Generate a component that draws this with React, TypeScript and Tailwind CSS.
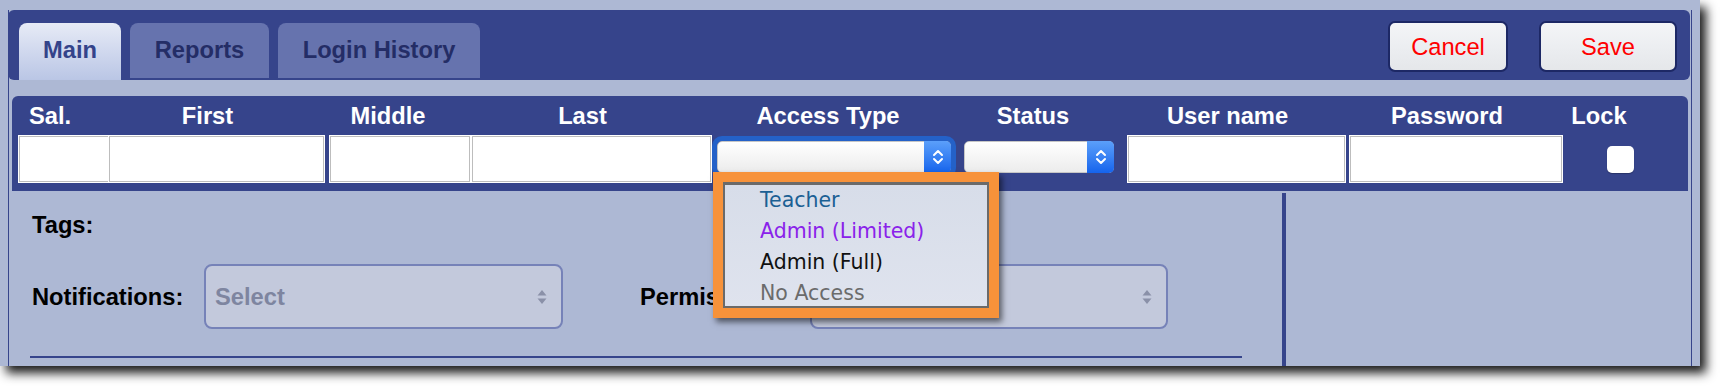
import React from 'react';

const NAVY = 'bg-[#36448b]';

function Chevrons() {
    return (
        <svg width="14" height="20" viewBox="0 0 14 20" fill="none" stroke="white" strokeWidth="2" strokeLinecap="round" strokeLinejoin="round">
            <path d="M3 8 L7 4 L11 8" />
            <path d="M3 12 L7 16 L11 12" />
        </svg>
    );
}

function MacSelect({ className, focused }: { className: string; focused?: boolean }) {
    return (
        <div className={`h-[32px] mt-[5px] flex rounded-[5px] border border-[#c6c6c6] bg-gradient-to-b from-white to-[#ececec] ${focused ? 'ring-[5px] ring-[#2461c8]' : ''} ${className}`}>
            <div className="flex-1" />
            <div className="w-[27px] -my-px -mr-px rounded-r-[5px] bg-gradient-to-b from-[#5b9ffa] to-[#1463ec] flex items-center justify-center">
                <Chevrons />
            </div>
        </div>
    );
}

function TextBox({ className }: { className: string }) {
    return <div className={`h-[46px] bg-white border border-[#bdbdbd] shadow-[0_0_0_1px_#ffffff] ${className}`} />;
}

function SortArrows() {
    return (
        <svg width="10" height="18" viewBox="0 0 10 18">
            <path d="M5 2 L9.5 7.5 H0.5 Z" fill="#8a90a8" />
            <path d="M5 16 L9.5 10.5 H0.5 Z" fill="#8a90a8" />
        </svg>
    );
}

function GraySelect({ className }: { className: string }) {
    return (
        <div className={`h-[65px] flex items-center justify-between pl-[9px] pr-[14px] rounded-[8px] border-2 border-[#7682b8] bg-[#c3c9dc] ${className}`}>
            <span className="font-bold text-[#7e85a0]">Select</span>
            <SortArrows />
        </div>
    );
}

const headers = [
    { label: 'Sal.', w: 'w-[76px]' },
    { label: 'First', w: 'w-[239px]' },
    { label: 'Middle', w: 'w-[122px]' },
    { label: 'Last', w: 'w-[267px]' },
    { label: 'Access Type', w: 'w-[224px]' },
    { label: 'Status', w: 'w-[186px]' },
    { label: 'User name', w: 'w-[203px]' },
    { label: 'Password', w: 'w-[236px]' },
    { label: 'Lock', w: 'w-[68px]' },
];

const options = [
    { label: 'Teacher', color: 'text-[#1b6094]' },
    { label: 'Admin (Limited)', color: 'text-[#8a22ea]' },
    { label: 'Admin (Full)', color: 'text-[#111111]' },
    { label: 'No Access', color: 'text-[#6b6b6b]' },
];

export default function App() {
    return (
        <div className="w-[1720px] h-[386px] bg-white overflow-hidden font-['Liberation_Sans',Arial,sans-serif] text-[23.7px] leading-[24px]">
            <div className="relative w-[1700px] h-[366px] bg-[#adb8d4] shadow-[6px_7px_10px_rgba(0,0,0,0.9)] pl-[8px] pt-[10px]">
                <div className="flex flex-col w-[1684px] h-[356px] border-x border-[#36448b]">
                    {/* tab bar */}
                    <div className={`-ml-px w-[1682px] h-[70px] shrink-0 ${NAVY} rounded-[6px] flex justify-between pl-[11px] pr-[13px]`}>
                        <div className="self-end flex items-end gap-[9px] font-bold">
                            <div className="w-[102px] h-[57px] rounded-t-[8px] bg-gradient-to-b from-[#e7ebf6] via-[#d0d8ee] to-[#bac6e5] text-center pt-[15px] text-[#34438a]">Main</div>
                            <div className="w-[139px] h-[55px] mb-[2px] rounded-t-[8px] bg-[#6673ae] text-center pt-[15px] text-[#242d66]">Reports</div>
                            <div className="w-[202px] h-[55px] mb-[2px] rounded-t-[8px] bg-[#6673ae] text-center pt-[15px] text-[#242d66]">Login History</div>
                        </div>
                        <div className="self-start mt-[11px] flex gap-[31px]">
                            <button className="w-[120px] h-[51px] rounded-[7px] border-2 border-[#1d2865] bg-gradient-to-b from-[#f4f5f7] via-[#eceef1] to-[#e5e7ea] text-[#ff0000]">Cancel</button>
                            <button className="w-[138px] h-[51px] rounded-[7px] border-2 border-[#1d2865] bg-gradient-to-b from-[#f4f5f7] via-[#eceef1] to-[#e5e7ea] text-[#ff0000]">Save</button>
                        </div>
                    </div>

                    {/* name header */}
                    <div className={`mt-[16px] ml-[3px] w-[1676px] h-[95px] shrink-0 ${NAVY} rounded-t-[6px] pt-[8px]`}>
                        <div className="flex text-white font-bold">
                            {headers.map(h => (
                                <div key={h.label} className={`${h.w} text-center whitespace-nowrap`}>{h.label}</div>
                            ))}
                        </div>
                        <div className="flex items-start mt-[8px] pl-[7px]">
                            <TextBox className="w-[90px]" />
                            <TextBox className="w-[215px]" />
                            <TextBox className="w-[140px] ml-[6px]" />
                            <TextBox className="w-[239px] ml-[2px]" />
                            <MacSelect className="w-[234px] ml-[6px]" focused />
                            <MacSelect className="w-[150px] ml-[13px]" />
                            <TextBox className="w-[217px] ml-[14px]" />
                            <TextBox className="w-[212px] ml-[5px]" />
                            <div className="w-[27px] h-[27px] ml-[45px] mt-[10px] rounded-[5px] bg-white shadow-[0_1px_1px_rgba(0,0,0,0.25)]" />
                        </div>
                    </div>

                    {/* body */}
                    <div className="flex flex-1 min-h-0">
                        <div className="w-[1273px] shrink-0">
                            <div className="mt-[22px] pl-[23px] font-bold text-black">Tags:</div>
                            <div className="mt-[27px] flex items-center pl-[23px] font-bold text-black">
                                <div className="w-[172px] whitespace-nowrap">Notifications:</div>
                                <GraySelect className="w-[359px]" />
                                {/* sits under the open list, as in the screenshot */}
                                <div className="w-[170px] ml-[77px] whitespace-nowrap">Permissions:</div>
                                <GraySelect className="w-[358px]" />
                            </div>
                            <div className="mt-[27px] ml-[21px] w-[1212px] h-[2px] bg-[#36448b]" />
                        </div>
                        <div className="w-[4px] mt-[2px] bg-[#36448b]" />
                        <div className="flex-1" />
                    </div>
                </div>

                {/* open Access Type list, highlighted */}
                <div className="absolute left-[713px] top-[172px] w-[286px] h-[146px] border-[10px] border-[#f7923a] shadow-[3px_4px_6px_rgba(0,0,0,0.55)]">
                    <div className="h-full bg-gradient-to-b from-[#d7dde9] to-[#dfe3ee] border-2 border-t-[3px] border-[#6a6a6a] font-['DejaVu_Sans',Verdana,sans-serif] text-[20.5px] leading-[31px]">
                        {options.map(o => (
                            <div key={o.label} className={`h-[31px] pl-[35px] whitespace-nowrap ${o.color}`}>{o.label}</div>
                        ))}
                    </div>
                </div>
            </div>
        </div>
    );
}
